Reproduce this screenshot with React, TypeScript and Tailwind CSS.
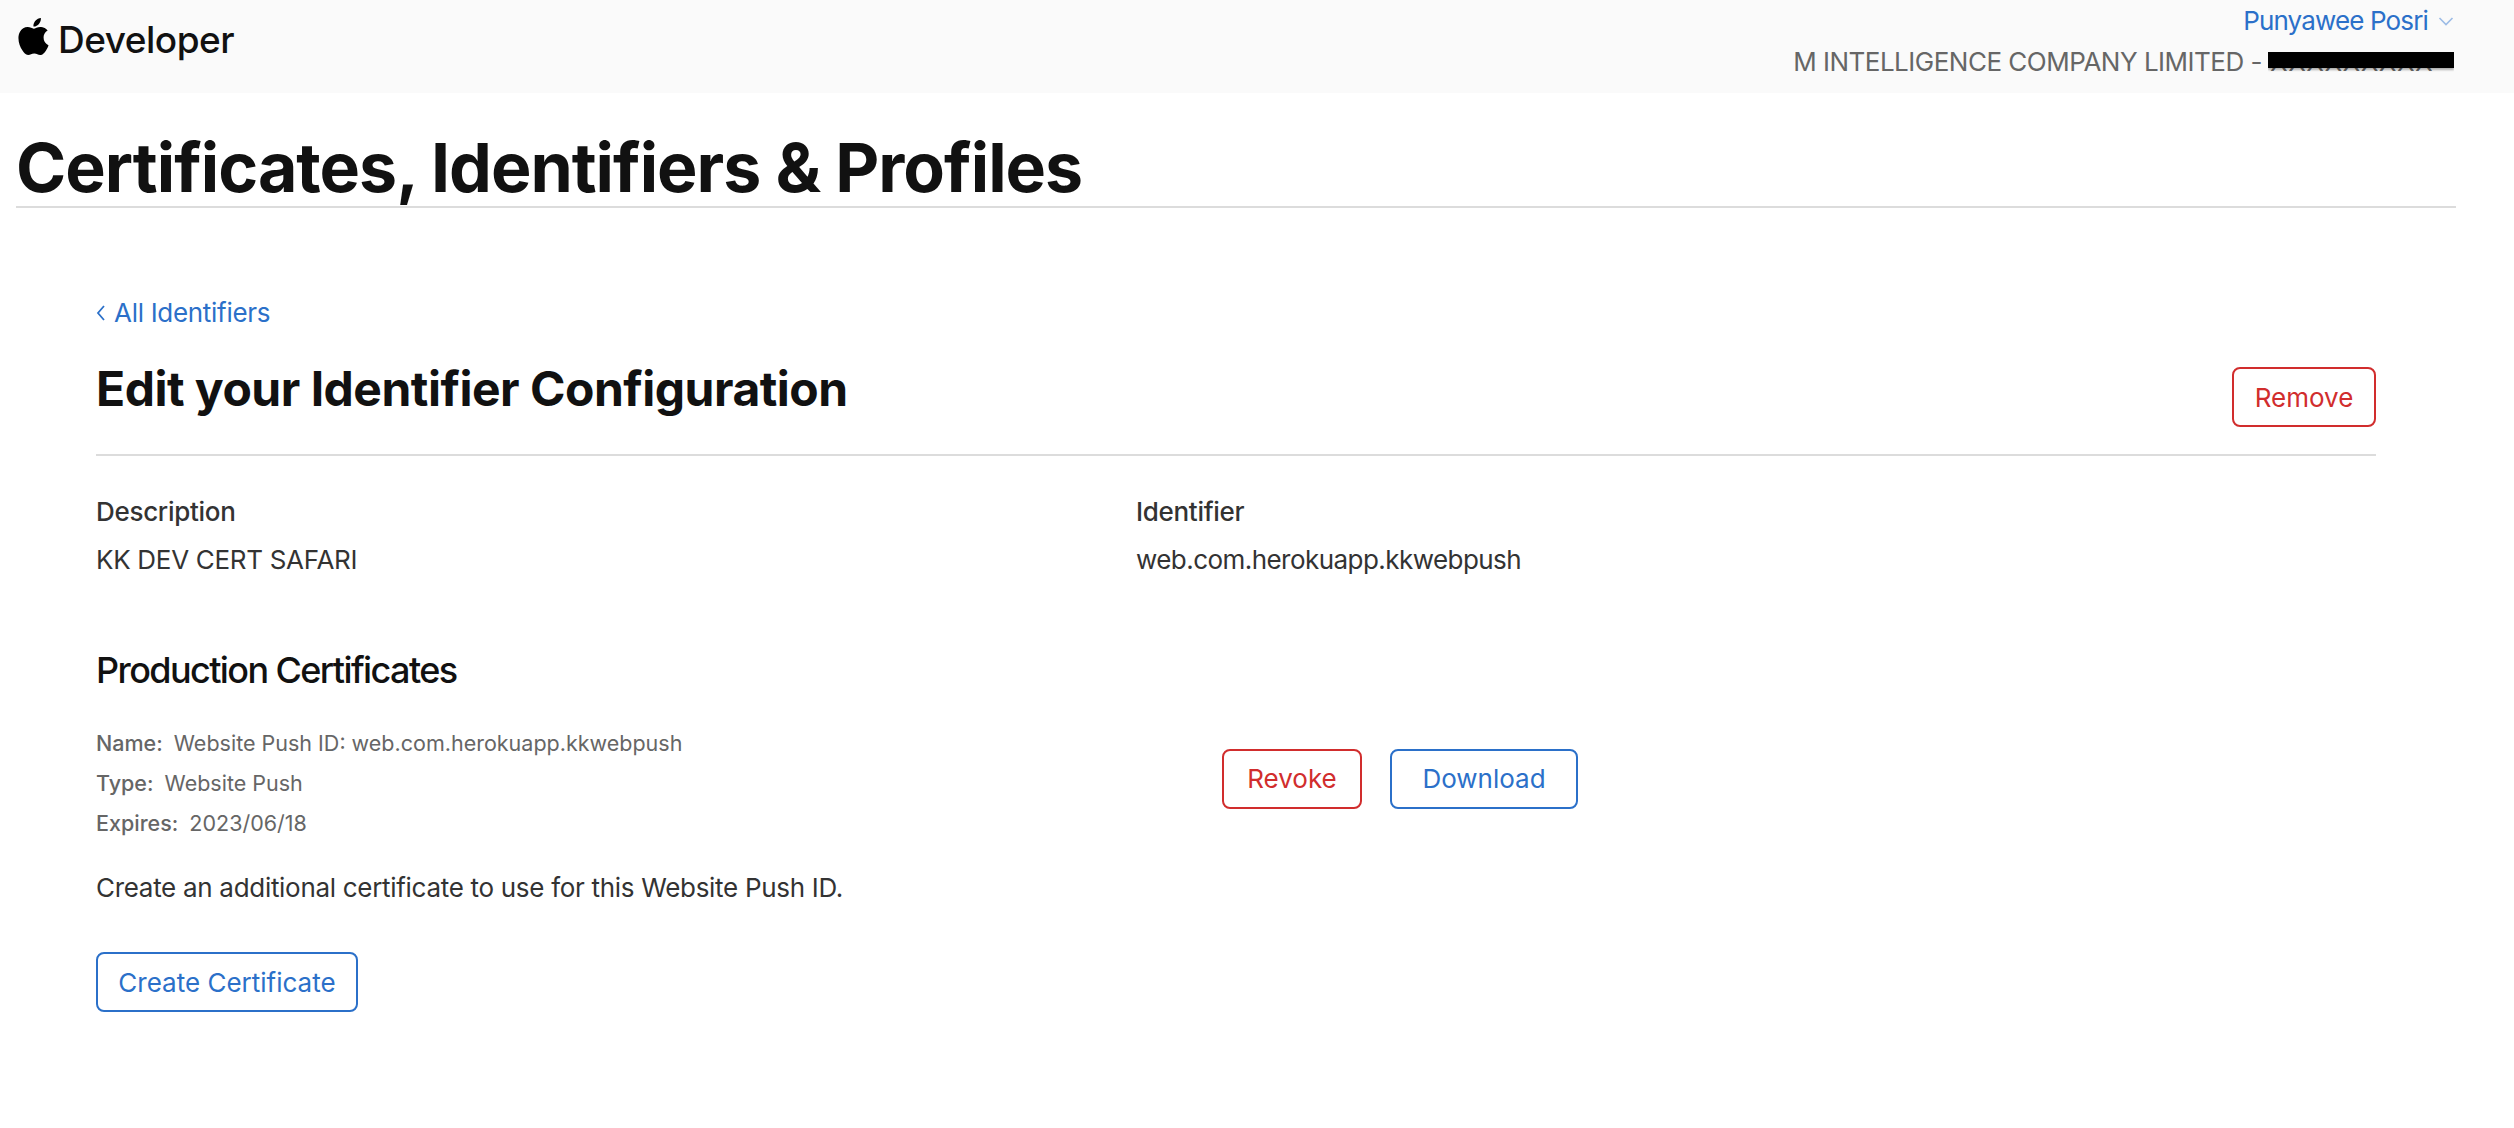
import { SiApple } from "react-icons/si";

function OutlineButton({ label, tone, className }: { label: string; tone: "red" | "blue"; className: string }) {
  const colors = tone === "red" ? "border-[#d12d2d] text-[#d12d2d]" : "border-[#2b70c9] text-[#2b70c9]";
  return (
    <button className={`flex h-[60px] items-center justify-center rounded-[8px] border-2 bg-white text-[26px] ${colors} ${className}`}>
      {label}
    </button>
  );
}

function Meta({ name, value }: { name: string; value: string }) {
  return (
    <p className="h-10 text-[21.5px] leading-10 text-[#666]">
      <span className="mr-[5px] font-medium">{name}:</span> {value}
    </p>
  );
}

export default function App() {
  return (
    <div className="min-h-[1128px] bg-white font-['Inter',sans-serif] text-[#1d1d1f]">
      <header className="flex h-[93px] justify-between bg-[#fafafa] pl-[15px] pr-[60px]">
        <div className="flex h-[80px] items-center gap-[6px]">
          <SiApple preserveAspectRatio="none" className="mb-[7px] h-[37px] w-[37px] text-black" />
          <span className="text-[37px] font-medium tracking-[-0.5px] text-[#111]">Developer</span>
        </div>
        <div className="flex flex-col items-end pt-[5px]">
          <div className="flex items-center gap-[10px] text-[26px] leading-[32px] tracking-[-0.85px] text-[#2b70c9]">
            Punyawee Posri
            <svg width="16" height="10" viewBox="0 0 16 10" fill="none" stroke="#9dbce6" strokeWidth="1.6">
              <path d="M1.5 2 8 8.5 14.5 2" />
            </svg>
          </div>
          <div className="mt-[9px] flex items-center text-[26px] leading-[32px] tracking-[-0.5px] text-[#666]">
            M INTELLIGENCE COMPANY LIMITED -
            <span className="relative ml-[6px] h-[32px] w-[186px] overflow-hidden">
              <span className="ml-[2px] tracking-[0.4px]">XXXXXXXXX</span>
              <span className="absolute left-0 top-[6px] h-[16px] w-[186px] bg-black shadow-[0_2px_2px_rgba(0,0,0,0.3)]" />
            </span>
          </div>
        </div>
      </header>

      <div className="mx-[16px] w-[2440px]">
        <h1 className="h-[115px] border-b-2 border-[#dcdcdc] pt-[33px] text-[68px] font-bold leading-[82px] tracking-[-1px] text-[#111]">
          Certificates, Identifiers &amp; Profiles
        </h1>

        <main className="px-[80px] pt-[89px]">
          <a className="flex items-center gap-[8px] text-[26px] leading-[32px] tracking-[-0.3px] text-[#2b70c9]">
            <svg width="10" height="18" viewBox="0 0 10 18" fill="none" stroke="#2b70c9" strokeWidth="1.8">
              <path d="M8 2 2 9l6 7" />
            </svg>
            All Identifiers
          </a>

          <div className="mt-[30px] flex h-[97px] items-start justify-between border-b-2 border-[#dcdcdc]">
            <h2 className="text-[48px] font-bold leading-[60px] tracking-[-0.5px] text-[#111]">Edit your Identifier Configuration</h2>
            <OutlineButton label="Remove" tone="red" className="mt-[8px] w-[144px]" />
          </div>

          <div className="mt-[40px] grid grid-cols-[1040px_1fr] text-[26px] leading-[32px] tracking-[-0.3px] text-[#333]">
            <div>
              <p className="font-medium">Description</p>
              <p className="mt-[16px]">KK DEV CERT SAFARI</p>
            </div>
            <div>
              <p className="font-medium">Identifier</p>
              <p className="mt-[16px] tracking-[-0.55px]">web.com.herokuapp.kkwebpush</p>
            </div>
          </div>

          <h3 className="mt-[72px] text-[36px] font-medium leading-[44px] tracking-[-1.6px] text-[#111]">Production Certificates</h3>

          <div className="mt-[31px] flex items-center">
            <div className="w-[1126px]">
              <Meta name="Name" value="Website Push ID: web.com.herokuapp.kkwebpush" />
              <Meta name="Type" value="Website Push" />
              <Meta name="Expires" value="2023/06/18" />
            </div>
            <OutlineButton label="Revoke" tone="red" className="mb-[9px] w-[140px]" />
            <OutlineButton label="Download" tone="blue" className="mb-[9px] ml-[28px] w-[188px]" />
          </div>

          <p className="mt-[29px] text-[26px] leading-[32px] tracking-[-0.3px] text-[#333]">Create an additional certificate to use for this Website Push ID.</p>

          <OutlineButton label="Create Certificate" tone="blue" className="mt-[48px] w-[262px]" />
        </main>
      </div>
    </div>
  );
}
